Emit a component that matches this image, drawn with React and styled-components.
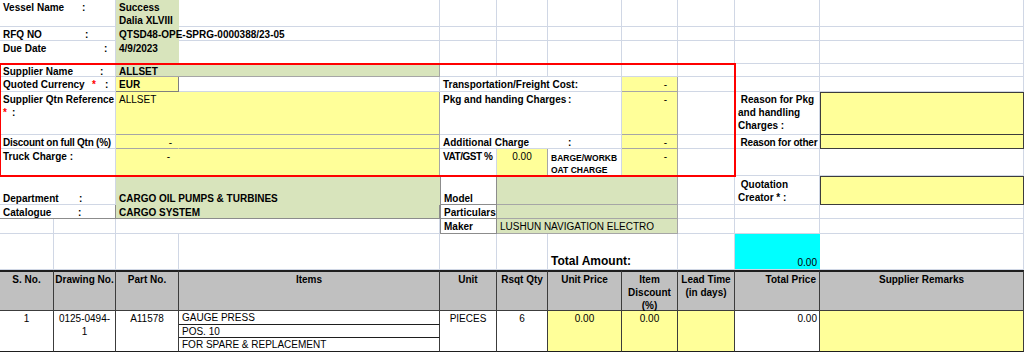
import React from 'react';
import styled, { createGlobalStyle } from 'styled-components';

const COLS = [54, 62, 63, 261, 57, 51, 74, 56, 57, 85, 204];
const ROWS = [27, 14, 23, 13, 15, 43, 14, 27, 29, 14, 15, 36, 41, 14, 13, 14];

const GRID = '#d0d7e5';
const GREEN = '#d8e4bc';
const YELLOW = '#ffff99';
const EDGE = '#a6a6a6';
const DARK = '#3c3c3c';

const GlobalStyle = createGlobalStyle`
  html, body {
    margin: 0;
    padding: 0;
    background: #fff;
  }
`;

const Sheet = styled.div`
  display: grid;
  grid-template-columns: ${COLS.map(w => `${w}px`).join(' ')};
  grid-template-rows: ${ROWS.map(h => `${h}px`).join(' ')};
  width: 1024px;
  height: 352px;
  overflow: hidden;
  font-family: "Liberation Sans", Arial, sans-serif;
  font-size: 10px;
  line-height: 13px;
  color: #000;
`;

// one spreadsheet cell; $pt pushes text down for bottom-aligned cells
const Cell = styled.div`
  grid-row: ${p => p.$r} / span ${p => p.$rs || 1};
  grid-column: ${p => p.$c} / span ${p => p.$cs || 1};
  box-sizing: border-box;
  min-width: 0;
  padding: ${p => (p.$pt != null ? p.$pt : 1)}px ${p => (p.$pr != null ? p.$pr : 3)}px 0 3px;
  border-right: 1px solid ${p => p.$rl || p.$line || GRID};
  border-bottom: 1px solid ${p => p.$line || GRID};
  border-left: ${p => (p.$lb ? `1px solid ${p.$line || GRID}` : 'none')};
  background: ${p => p.$bg || 'transparent'};
  font-weight: ${p => (p.$bold ? 700 : 400)};
  text-align: ${p => p.$align || 'left'};
  white-space: ${p => (p.$nowrap ? 'nowrap' : 'normal')};
  letter-spacing: ${p => p.$ls || 0}px;
`;

const Label = styled(Cell)`
  font-weight: 700;
`;

const Key = styled.span`
  display: inline-block;
  width: ${p => p.$w}px;
`;

const Star = styled.span`
  display: inline-block;
  width: ${p => p.$w}px;
  color: #ff0000;
`;

const Green = styled(Cell)`
  background: ${GREEN};
  border-right-color: ${p => p.$line || GREEN};
  border-bottom-color: ${p => p.$line || GREEN};
`;

const Field = styled(Cell)`
  background: ${YELLOW};
  border-right-color: ${p => p.$rl || p.$line || EDGE};
  border-bottom-color: ${p => p.$line || EDGE};
`;

const Box = styled(Field)`
  border: 1px solid ${DARK};
  border-top-width: ${p => (p.$noTop ? 0 : 1)}px;
`;

const Small = styled(Cell)`
  font-size: 8.5px;
  font-weight: 700;
  line-height: 12px;
  padding-top: 3px;
`;

const Total = styled(Cell)`
  font-size: 12px;
  font-weight: 700;
  line-height: 15px;
  white-space: nowrap;
`;

const Cyan = styled(Cell)`
  background: #00ffff;
  border-right-color: #00ffff;
  padding-right: 2px;
`;

const Head = styled(Cell)`
  background: #c0c0c0;
  font-weight: 700;
  text-align: ${p => p.$align || 'center'};
  padding: 1px ${p => (p.$align === 'right' ? 3 : 1)}px 0 1px;
  border-top: 2px solid #1e1e1e;
  border-right: 1px solid ${DARK};
  border-bottom: 1px solid ${DARK};
`;

const Data = styled(Cell)`
  text-align: ${p => p.$align || 'center'};
  background: ${p => p.$bg || '#fff'};
  border-right: 1px solid ${DARK};
  border-bottom: 1px solid #1e1e1e;
`;

const ItemLine = styled(Cell)`
  padding: 0 2px 0 3px;
  border-right: 1px solid ${DARK};
  border-bottom: 1px solid #1e1e1e;
  white-space: nowrap;
`;

const Frame = styled.div`
  grid-row: 4 / 9;
  grid-column: 1 / 10;
  margin: -1px;
  border: 2px solid #ff0000;
  pointer-events: none;
  z-index: 2;
`;

const Blanks = ({ r, from, to }) =>
  Array.from({ length: to - from + 1 }, (_, i) => <Cell key={`${r}-${from + i}`} $r={r} $c={from + i} />);

const App = () => {
  return (
    <>
      <GlobalStyle />
      <Sheet>
        {/* vessel block */}
        <Label $r={1} $c={1} $cs={2}><Key $w={79}>Vessel Name</Key>:</Label>
        <Green $r={1} $c={3} $bold>Success<br />Dalia XLVIII</Green>
        <Blanks r={1} from={4} to={11} />

        <Label $r={2} $c={1} $cs={2}><Key $w={82}>RFQ NO</Key>:</Label>
        <Green $r={2} $c={3} $bold $nowrap>QTSD48-OPE-SPRG-0000388/23-05</Green>
        <Blanks r={2} from={4} to={11} />

        <Label $r={3} $c={1} $cs={2}><Key $w={101}>Due Date</Key>:</Label>
        <Green $r={3} $c={3} $bold>4/9/2023</Green>
        <Blanks r={3} from={4} to={11} />

        {/* supplier block */}
        <Label $r={4} $c={1} $cs={2}><Key $w={97}>Supplier Name</Key>:</Label>
        <Green $r={4} $c={3} $cs={2} $bold $line={EDGE}>ALLSET</Green>
        <Blanks r={4} from={5} to={11} />

        <Label $r={5} $c={1} $cs={2} $nowrap><Key $w={89}>Quoted Currency</Key><Star $w={13}>*</Star>:</Label>
        <Field $r={5} $c={3} $bold $line="#7f7f7f">EUR</Field>
        <Cell $r={5} $c={4} />
        <Label $r={5} $c={5} $cs={3}>Transportation/Freight Cost:</Label>
        <Field $r={5} $c={8} $align="right" $pr={10}>-</Field>
        <Blanks r={5} from={9} to={11} />

        <Label $r={6} $c={1} $cs={2} $nowrap $pr={0}>Supplier Qtn Reference<br /><Star $w={9}>*</Star>:</Label>
        <Field $r={6} $c={3} $cs={2}>ALLSET</Field>
        <Label $r={6} $c={5} $cs={3}><Key $w={125}>Pkg and handing Charges</Key>:</Label>
        <Field $r={6} $c={8} $align="right" $pr={10}>-</Field>
        <Cell $r={6} $c={9} />
        <Label $r={6} $c={10} $pr={1}>{'\u00a0'}Reason for Pkg and handling Charges :</Label>
        <Box $r={6} $c={11} />

        <Label $r={7} $c={1} $cs={2} $nowrap $pr={0} $ls={-0.25}>Discount on full Qtn (%)</Label>
        <Field $r={7} $c={3} $align="right" $pr={6} $rl={YELLOW}>-</Field>
        <Field $r={7} $c={4} />
        <Label $r={7} $c={5} $cs={3}><Key $w={125}>Additional Charge</Key>:</Label>
        <Field $r={7} $c={8} $align="right" $pr={10}>-</Field>
        <Cell $r={7} $c={9} />
        <Label $r={7} $c={10} $nowrap $pr={0} $ls={-0.2}>{'\u00a0'}Reason for other</Label>
        <Box $r={7} $c={11} $noTop />

        <Label $r={8} $c={1} $cs={2}>Truck Charge :</Label>
        <Field $r={8} $c={3} $align="right" $pr={8} $rl={YELLOW}>-</Field>
        <Field $r={8} $c={4} />
        <Label $r={8} $c={5} $nowrap $pr={0} $ls={-0.45}>VAT/GST %</Label>
        <Field $r={8} $c={6} $align="center">0.00</Field>
        <Small $r={8} $c={7}>BARGE/WORKB<br />OAT CHARGE</Small>
        <Field $r={8} $c={8} $align="right" $pr={10}>-</Field>
        <Blanks r={8} from={9} to={11} />

        {/* department block */}
        <Label $r={9} $c={1} $cs={2} $pt={16}><Key $w={76}>Department</Key>:</Label>
        <Green $r={9} $c={3} $cs={2} $bold $pt={16}>CARGO OIL PUMPS &amp; TURBINES</Green>
        <Label $r={9} $c={5} $pt={16} $line="#8c8c8c" $lb>Model</Label>
        <Green $r={9} $c={6} $cs={3} $line={EDGE} />
        <Cell $r={9} $c={9} />
        <Label $r={9} $c={10} $pt={2} $pr={1}>{'\u00a0'}Quotation Creator * :</Label>
        <Box $r={9} $c={11} />

        <Label $r={10} $c={1} $cs={2} $line="#8c8c8c"><Key $w={75}>Catalogue</Key>:</Label>
        <Green $r={10} $c={3} $cs={2} $bold $line="#8c8c8c">CARGO SYSTEM</Green>
        <Label $r={10} $c={5} $nowrap $pr={0} $line="#8c8c8c" $lb>Particulars</Label>
        <Green $r={10} $c={6} $cs={3} $line={EDGE} />
        <Blanks r={10} from={9} to={11} />

        <Blanks r={11} from={1} to={2} />
        <Cell $r={11} $c={3} $cs={2} />
        <Label $r={11} $c={5} $line="#8c8c8c" $lb>Maker</Label>
        <Green $r={11} $c={6} $cs={3} $line={EDGE} $nowrap>LUSHUN NAVIGATION ELECTRO</Green>
        <Blanks r={11} from={9} to={11} />

        <Blanks r={12} from={1} to={6} />
        <Total $r={12} $c={7} $cs={2} $pt={20}>Total Amount:</Total>
        <Cell $r={12} $c={9} />
        <Cyan $r={12} $c={10} $pt={22} $align="right">0.00</Cyan>
        <Cell $r={12} $c={11} />

        {/* item table */}
        <Head $r={13} $c={1}>S. No.</Head>
        <Head $r={13} $c={2} $nowrap>Drawing No.</Head>
        <Head $r={13} $c={3}>Part No.</Head>
        <Head $r={13} $c={4}>Items</Head>
        <Head $r={13} $c={5}>Unit</Head>
        <Head $r={13} $c={6} $nowrap>Rsqt Qty</Head>
        <Head $r={13} $c={7}>Unit Price</Head>
        <Head $r={13} $c={8}>Item Discount (%)</Head>
        <Head $r={13} $c={9}>Lead Time (in days)</Head>
        <Head $r={13} $c={10} $align="right">Total Price</Head>
        <Head $r={13} $c={11}>Supplier Remarks</Head>

        <Data $r={14} $rs={3} $c={1}>1</Data>
        <Data $r={14} $rs={3} $c={2}>0125-0494-<br />1</Data>
        <Data $r={14} $rs={3} $c={3}>A11578</Data>
        <ItemLine $r={14} $c={4}>GAUGE PRESS</ItemLine>
        <ItemLine $r={15} $c={4}>POS. 10</ItemLine>
        <ItemLine $r={16} $c={4}>FOR SPARE &amp; REPLACEMENT</ItemLine>
        <Data $r={14} $rs={3} $c={5}>PIECES</Data>
        <Data $r={14} $rs={3} $c={6}>6</Data>
        <Data $r={14} $rs={3} $c={7} $bg={YELLOW}>0.00</Data>
        <Data $r={14} $rs={3} $c={8} $bg={YELLOW}>0.00</Data>
        <Data $r={14} $rs={3} $c={9} $bg={YELLOW} />
        <Data $r={14} $rs={3} $c={10} $align="right" $pr={2}>0.00</Data>
        <Data $r={14} $rs={3} $c={11} $bg={YELLOW} />

        <Frame />
      </Sheet>
    </>
  );
};

export default App;
